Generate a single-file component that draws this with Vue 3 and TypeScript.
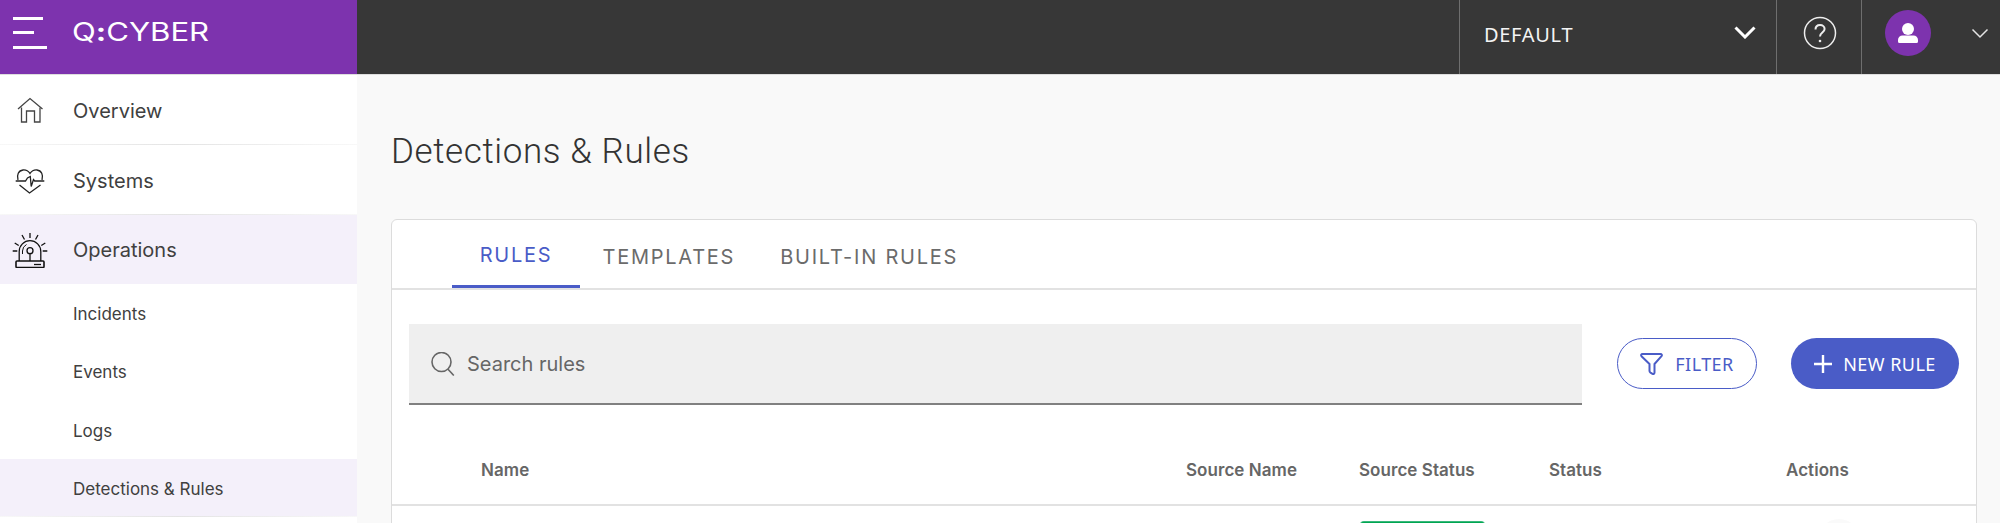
<script setup lang="ts">
const subItems = [
  { label: "Incidents", active: false },
  { label: "Events", active: false },
  { label: "Logs", active: false },
  { label: "Detections & Rules", active: true },
];

const tabs = ["Rules", "Templates", "Built-in rules"];
</script>

<template>
  <div class="app">
    <header class="topbar">
      <div class="brand">
        <button class="burger" aria-label="Menu">
          <span class="b1"></span>
          <span class="b2"></span>
          <span class="b3"></span>
        </button>
        <span class="logo">Q<span class="logo-colon">:</span>CYBER</span>
      </div>
      <div class="top-right">
        <div class="tenant">
          <span>DEFAULT</span>
          <svg class="tenant-chevron" width="22" height="14" viewBox="0 0 22 14" fill="none" stroke="#fff" stroke-width="3">
            <path d="M1.5 2.500l9.500 9.500 9.500-9.500" />
          </svg>
        </div>
        <div class="help">
          <svg width="34" height="34" viewBox="0 0 34 34" fill="none" stroke="#eee" stroke-width="1.5">
            <circle cx="17" cy="17" r="15.500" />
            <path d="M12.500 13.500c0-2.800 2-4.500 4.600-4.500 2.600 0 4.500 1.700 4.500 4 0 3.600-4.600 3.600-4.600 7.500" stroke-width="2" />
            <circle cx="17" cy="25" r="1.300" fill="#eee" stroke="none" />
          </svg>
        </div>
        <div class="user">
          <div class="avatar">
            <svg width="20" height="20" viewBox="0 0 20 20" fill="#fff">
              <circle cx="10" cy="6" r="6" />
              <path d="M0 18.500V17a4.500 4.500 0 0 1 4.500-4.500h11A4.500 4.500 0 0 1 20 17v1.500a1.500 1.500 0 0 1-1.500 1.500h-17A1.500 1.500 0 0 1 0 18.500z" />
            </svg>
          </div>
          <svg width="18" height="11" viewBox="0 0 18 11" fill="none" stroke="#e4e4e4" stroke-width="1.5">
            <path d="M1.500 1.500L9 9l7.500-7.500" />
          </svg>
        </div>
      </div>
    </header>

    <div class="body">
      <aside class="sidebar">
        <div class="nav-row sep">
          <svg class="nav-icon" width="30" height="30" viewBox="0 0 30 30" fill="none" stroke="#444" stroke-width="1.300">
            <path d="M3 13L15 2.500 27.500 13" />
            <path d="M6.500 11.500v14.500h5V15h8v11H25V11.500" />
          </svg>
          <span>Overview</span>
        </div>
        <div class="nav-row sep">
          <svg class="nav-icon" width="30" height="30" viewBox="0 0 30 30" fill="none" stroke="#222" stroke-width="1.300">
            <path d="M3 14C1.500 9 3.500 4.500 8 4c3-.3 5.500 1.300 7 3.500C16.500 5.300 19 3.700 22 4c4.500.5 6.500 5 5 10" />
            <path d="M.7 15h9.800l2-3 2.800-1.500.9 10 2.300-7 1.200 1.500H29.300" />
            <path d="M4.500 19l10 8 11-8" />
          </svg>
          <span>Systems</span>
        </div>
        <div class="nav-row active">
          <svg class="nav-icon" width="36" height="36" viewBox="0 0 36 36" fill="none" stroke="#111" stroke-width="1.300">
            <path d="M7.200 29v-9.500a10.800 10.800 0 0 1 21.600 0V29" />
            <path d="M10.500 22v-3a7.500 7.500 0 0 1 4-6.500" stroke-width="1" />
            <circle cx="18" cy="18.700" r="3" />
            <path d="M18 21.700V29" />
            <rect x="4" y="29" width="28" height="6.500" rx="1" stroke-width="1.600" />
            <path d="M22 32.500h7" />
            <path d="M18 1v5M10 3l2.500 4.500M26 3l-2.500 4.500M2.700 11l4 2.500M33.300 11l-4 2.500M.7 19h4.600M30.700 19h4.600" />
          </svg>
          <span>Operations</span>
        </div>
        <div
          v-for="item in subItems"
          :key="item.label"
          class="sub-row"
          :class="{ active: item.active, sep: item.active }"
        >
          {{ item.label }}
        </div>
      </aside>

      <main class="content">
        <h1>Detections &amp; Rules</h1>
        <section class="card">
          <nav class="tabs">
            <div v-for="(tab, i) in tabs" :key="tab" class="tab" :class="{ active: i === 0 }">
              {{ tab }}
            </div>
          </nav>

          <div class="toolbar">
            <div class="search">
              <svg width="24" height="24" viewBox="0 0 24 24" fill="none" stroke="#666" stroke-width="1.600">
                <circle cx="10.500" cy="10" r="9.500" />
                <path d="M16.800 17l6 6.500" />
              </svg>
              <span>Search rules</span>
            </div>
            <button class="btn-outline">
              <svg width="23" height="22" viewBox="0 0 23 22" fill="none" stroke="#4a5cc7" stroke-width="2" stroke-linejoin="round">
                <path d="M2.500 1h18c1.200 0 1.800 1.200 1 2.200L14.500 11v8.500c0 1.200-1 1.800-2 1.300l-2-1.200c-.6-.4-1-.9-1-1.600V11L1.500 3.200C.7 2.200 1.300 1 2.500 1z" />
              </svg>
              Filter
            </button>
            <button class="btn-solid">
              <svg width="18" height="18" viewBox="0 0 18 18" fill="none" stroke="#fff" stroke-width="2.400">
                <path d="M9 0v18M0 9h18" />
              </svg>
              New rule
            </button>
          </div>

          <div class="table-head">
            <div class="col-name">Name</div>
            <div class="col-source">Source Name</div>
            <div class="col-sstatus">Source Status</div>
            <div class="col-status">Status</div>
            <div class="col-actions">Actions</div>
          </div>
          <div class="table-row">
            <div class="badge"></div>
            <div class="action-dot"></div>
          </div>
        </section>
      </main>
    </div>
  </div>
</template>

<style>
html,
body {
  margin: 0;
  height: 100%;
  overflow: hidden;
  background: #f9f9f9;
}
</style>

<style scoped>
.app {
  width: 2000px;
  height: 523px;
  overflow: hidden;
  font-family: Inter, "Liberation Sans", sans-serif;
  color: #333;
}

.topbar {
  display: flex;
  height: 74px;
  background: #373737;
  border-bottom: 1px solid #dedede;
}

.brand {
  display: flex;
  align-items: center;
  width: 357px;
  height: 74px;
  background: #7d33ae;
}

.burger {
  display: flex;
  flex-direction: column;
  gap: 11.5px;
  margin: 0 0 9px 13px;
  padding: 0;
  width: 34px;
  background: none;
  border: 0;
}

.burger span {
  display: block;
  height: 3px;
  background: #fff;
}

.b1 { width: 30px; }
.b2 { width: 21px; }
.b3 { width: 34px; }

.logo {
  margin: 0 0 12px 25px;
  font-size: 25.5px;
  font-weight: 400;
  color: #fff;
  transform: scaleX(1.22);
  transform-origin: left center;
}

.logo-colon {
  font-weight: 700;
}

.top-right {
  display: flex;
  margin-left: auto;
  height: 74px;
}

.tenant {
  display: flex;
  align-items: center;
  justify-content: space-between;
  box-sizing: border-box;
  width: 317px;
  padding: 0 20px 6px 24px;
  border-left: 1px solid #6e6e6e;
  font-family: "Noto Sans", sans-serif;
  font-size: 20px;
  letter-spacing: 0.7px;
  color: #f4f4f4;
}

.tenant-chevron {
  margin-bottom: 4px;
}

.help {
  display: flex;
  align-items: center;
  justify-content: center;
  box-sizing: border-box;
  width: 85px;
  padding: 0 0 8px 1px;
  border-left: 1px solid #6e6e6e;
}

.user {
  display: flex;
  align-items: center;
  box-sizing: border-box;
  width: 139px;
  padding: 0 0 8px 23px;
  border-left: 1px solid #6e6e6e;
  gap: 40px;
}

.avatar {
  display: flex;
  align-items: center;
  justify-content: center;
  width: 46px;
  height: 46px;
  border-radius: 50%;
  background: #7d33ae;
}

.body {
  display: flex;
  height: 448px;
}

.sidebar {
  flex: none;
  width: 357px;
  background: #fff;
}

.nav-row {
  display: grid;
  grid-template-columns: 60px 1fr;
  column-gap: 13px;
  align-items: center;
  box-sizing: border-box;
  height: 70px;
  padding-top: 2px;
  font-size: 20px;
  color: #404040;
}

.nav-icon {
  justify-self: center;
}

.nav-row.active {
  height: 69px;
  padding-top: 0;
}

.nav-row.active,
.sub-row.active {
  background-color: #f4f0fa;
}

.sep {
  background-image: linear-gradient(90deg, #f8f8f8, #e4e4e4 50%, #f8f8f8);
  background-position: bottom;
  background-size: 100% 1px;
  background-repeat: no-repeat;
}

.sub-row {
  display: flex;
  align-items: center;
  box-sizing: border-box;
  height: 58.3px;
  padding: 2px 0 0 73px;
  font-size: 17px;
  color: #404040;
}

.content {
  flex: 1;
  padding: 0 23px 0 34px;
  background: #f9f9f9;
}

h1 {
  margin: 0;
  padding-top: 56px;
  height: 88px;
  font-size: 35px;
  line-height: 42px;
  font-weight: 300;
  color: #333;
  font-family: Roboto, sans-serif;
  letter-spacing: 0.6px;
}

.card {
  box-sizing: border-box;
  height: 400px;
  background: #fff;
  border: 1px solid #dcdcdc;
  border-radius: 6px;
}

.tabs {
  display: flex;
  height: 68px;
  padding-left: 60px;
  border-bottom: 2px solid #e2e2e2;
}

.tab {
  display: flex;
  align-items: center;
  justify-content: center;
  box-sizing: border-box;
  height: 68px;
  padding: 5px 22.5px 0;
  font-size: 20px;
  letter-spacing: 1.75px;
  text-transform: uppercase;
  color: #6b6b6b;
}

.tab.active {
  width: 128px;
  padding: 5px 0 0;
  color: #4a5cc7;
  border-bottom: 3px solid #4a5cc7;
}

.toolbar {
  display: flex;
  align-items: center;
  padding: 34px 17px 0 17px;
}

.search {
  display: flex;
  align-items: center;
  gap: 12px;
  box-sizing: border-box;
  width: 1173px;
  height: 81px;
  padding-left: 22px;
  background: #efefef;
  border-bottom: 2px solid #808080;
  font-size: 20px;
  color: #666;
}

.btn-outline,
.btn-solid {
  display: flex;
  align-items: center;
  justify-content: center;
  box-sizing: border-box;
  height: 51px;
  margin-bottom: 2px;
  border-radius: 26px;
  font-size: 18px;
  letter-spacing: 0.45px;
  text-transform: uppercase;
  font-family: "Noto Sans", sans-serif;
}

.btn-outline {
  width: 140px;
  margin-left: 35px;
  gap: 12px;
  background: #fff;
  color: #4a5cc7;
  border: 1.5px solid #4a5cc7;
}

.btn-solid {
  width: 168px;
  margin-left: 34px;
  gap: 11px;
  background: #4a5cc7;
  color: #fff;
  border: 0;
}

.table-head {
  display: flex;
  align-items: center;
  box-sizing: border-box;
  height: 101px;
  padding-top: 30px;
  border-bottom: 2px solid #e2e2e2;
  font-size: 17px;
  letter-spacing: 0.05px;
  font-weight: 600;
  color: #666;
}

.col-name { width: 705px; margin-left: 89px; }
.col-source { width: 173px; }
.col-sstatus { width: 190px; }
.col-status { width: 237px; }
.col-actions { width: 100px; }

.table-row {
  display: flex;
  padding-left: 968px;
  padding-top: 15px;
}

.badge {
  box-sizing: border-box;
  width: 125px;
  height: 20px;
  border-radius: 4px;
  background: #00a651;
  border-top: 1px solid #3ab87c;
}

.action-dot {
  width: 40px;
  height: 40px;
  margin: -2px 0 0 334px;
  border-radius: 50%;
  background: #fafafa;
}
</style>
